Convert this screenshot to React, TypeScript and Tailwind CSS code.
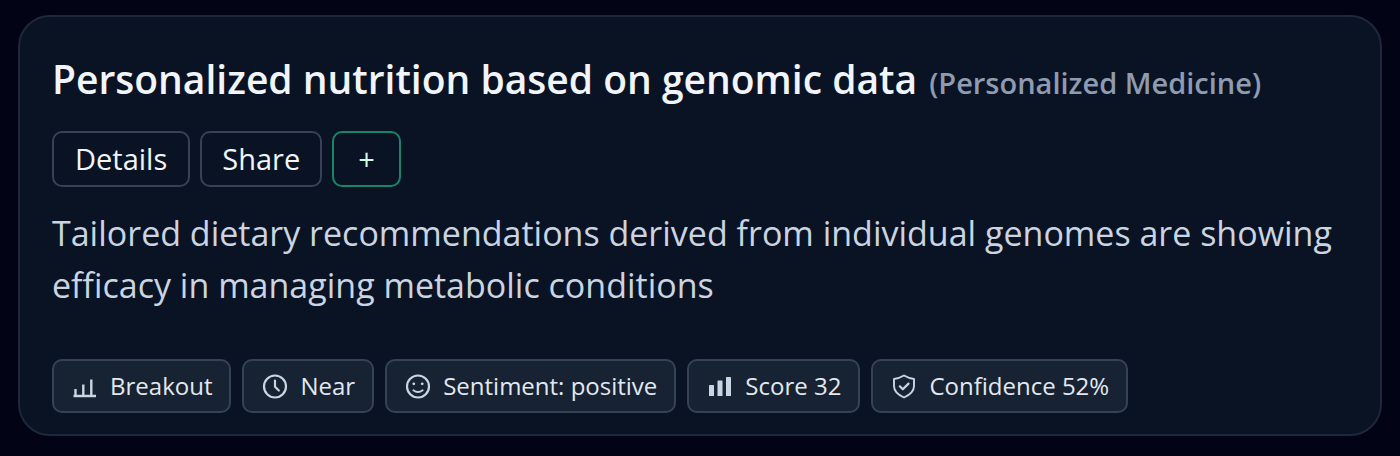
import type { ReactNode } from "react";

function Icon({ children }: { children: ReactNode }) {
  return (
    <svg
      viewBox="0 0 28 28"
      className="size-7 shrink-0"
      fill="none"
      stroke="currentColor"
      strokeWidth="2.2"
      strokeLinecap="round"
      strokeLinejoin="round"
      aria-hidden="true"
    >
      {children}
    </svg>
  );
}

const chips: { label: string; icon: ReactNode }[] = [
  {
    label: "Breakout",
    icon: <path d="M2.5 24H25M4.5 23.5V17M12.3 23.5V12.5M20.3 23.5V7.5" strokeWidth="2.4" strokeLinecap="butt" />,
  },
  {
    label: "Near",
    icon: (
      <>
        <circle cx="14" cy="14.5" r="11" />
        <path d="M14 8.5V14.7L17.8 18.5" />
      </>
    ),
  },
  {
    label: "Sentiment: positive",
    icon: (
      <>
        <circle cx="14" cy="14.5" r="11" />
        <path d="M9.3 18.2Q14 21.8 18.7 18.2" strokeWidth="1.8" />
        <circle cx="9.8" cy="11.8" r="1.4" fill="currentColor" stroke="none" />
        <circle cx="18.2" cy="11.8" r="1.4" fill="currentColor" stroke="none" />
      </>
    ),
  },
  {
    label: "Score 32",
    icon: (
      <g fill="currentColor" stroke="none">
        <rect x="3" y="13" width="5" height="11" rx="0.6" />
        <rect x="11.5" y="8.5" width="5" height="15.5" rx="0.6" />
        <rect x="20" y="5" width="5" height="19" rx="0.6" />
      </g>
    ),
  },
  {
    label: "Confidence 52%",
    icon: (
      <>
        <path d="M14 3.5Q18.5 6.2 24 7V14C24 19.2 20 22.8 14 25.5C8 22.8 4 19.2 4 14V7Q9.5 6.2 14 3.5Z" strokeWidth="1.9" />
        <path d="M9.8 14.3L12.8 17.3L18.5 11.6" />
      </>
    ),
  },
];

export default function App() {
  return (
    <main className="min-h-screen bg-[#020314] px-[18px] pt-[15px] pb-5 font-['Open_Sans','Noto_Sans',sans-serif]">
      <article className="rounded-[32px] border-2 border-[#1e283a] bg-[#0a1324] px-8 pt-[34px] pb-[21px]">
        <h2 className="flex flex-wrap items-baseline gap-x-3 font-semibold leading-[56px]">
          <span className="text-[39px] text-[#f1f5f9]">Personalized nutrition based on genomic data</span>
          <span className="text-[29px] text-[#8e9bb0]">(Personalized Medicine)</span>
        </h2>
        <div className="mt-5 flex flex-wrap gap-[10px] text-[29px] leading-[52px]">
          <button type="button" className="rounded-[10px] border-2 border-[#364357] px-[21px] text-[#f1f5f9]">
            Details
          </button>
          <button type="button" className="rounded-[10px] border-2 border-[#364357] px-5 text-[#f1f5f9]">
            Share
          </button>
          <button type="button" aria-label="Add" className="rounded-[10px] border-2 border-[#178568] px-6 text-[#d1fae5]">
            +
          </button>
        </div>
        <p className="mt-5 text-[34px] leading-[52px] text-[#cbd5e1]">
          Tailored dietary recommendations derived from individual genomes are showing efficacy in managing metabolic
          conditions
        </p>
        <ul className="mt-12 flex flex-wrap gap-[11px]">
          {chips.map((chip) => (
            <li
              key={chip.label}
              className="flex items-center gap-[11px] rounded-[10px] border-2 border-[#364357] bg-[#172232] px-[17px] text-[24px] leading-[50px] text-[#cbd5e1]"
            >
              <Icon>{chip.icon}</Icon>
              <span className="text-[#e2e8f0]">{chip.label}</span>
            </li>
          ))}
        </ul>
      </article>
    </main>
  );
}
